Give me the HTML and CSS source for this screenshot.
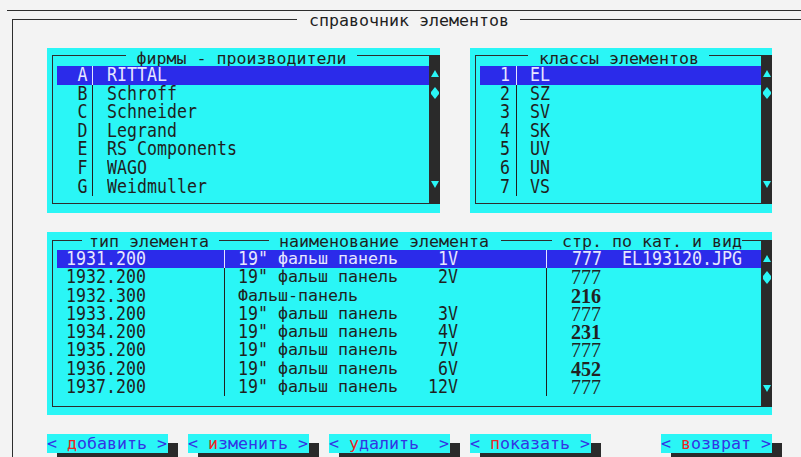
FILE: index.html
```html
<!DOCTYPE html>
<html lang="ru">
<head>
<meta charset="utf-8">
<title>справочник элементов</title>
<link rel="stylesheet" href="styles.css">
</head>
<body>
<div class="screen">
  <div class="topline"></div>
  <div class="desk">
    <div class="desk-head"><span class="ln"></span><span class="desk-title">справочник элементов</span><span class="ln"></span></div>
    <div class="desk-body">
      <div class="tops">
        <section class="panel firms">
          <div class="frame">
            <div class="frame-head"><span class="ln"></span><span class="frame-title">фирмы - производители</span><span class="ln"></span></div>
            <ul class="list">
              <li class="row sel"><span class="key"><span class="t">A</span></span><span class="name"><span class="t">RITTAL</span></span></li>
              <li class="row"><span class="key"><span class="t">B</span></span><span class="name"><span class="t">Schroff</span></span></li>
              <li class="row"><span class="key"><span class="t">C</span></span><span class="name"><span class="t">Schneider</span></span></li>
              <li class="row"><span class="key"><span class="t">D</span></span><span class="name"><span class="t">Legrand</span></span></li>
              <li class="row"><span class="key"><span class="t">E</span></span><span class="name"><span class="t">RS Components</span></span></li>
              <li class="row"><span class="key"><span class="t">F</span></span><span class="name"><span class="t">WAGO</span></span></li>
              <li class="row"><span class="key"><span class="t">G</span></span><span class="name"><span class="t">Weidmuller</span></span></li>
            </ul>
          </div>
          <div class="scroll">
            <svg class="up" width="8" height="7" viewBox="0 0 8 7"><path d="M4 0 8 7H0z"/></svg>
            <svg class="dia" width="8" height="12" viewBox="0 0 8 12"><path d="M4 0 8 5v2l-4 5-4-5V5z"/></svg>
            <svg class="down" width="8" height="7" viewBox="0 0 8 7"><path d="M0 0h8L4 7z"/></svg>
          </div>
        </section>
        <section class="panel classes">
          <div class="frame">
            <div class="frame-head"><span class="ln"></span><span class="frame-title">классы элементов</span><span class="ln"></span></div>
            <ul class="list">
              <li class="row sel"><span class="key"><span class="t">1</span></span><span class="name"><span class="t">EL</span></span></li>
              <li class="row"><span class="key"><span class="t">2</span></span><span class="name"><span class="t">SZ</span></span></li>
              <li class="row"><span class="key"><span class="t">3</span></span><span class="name"><span class="t">SV</span></span></li>
              <li class="row"><span class="key"><span class="t">4</span></span><span class="name"><span class="t">SK</span></span></li>
              <li class="row"><span class="key"><span class="t">5</span></span><span class="name"><span class="t">UV</span></span></li>
              <li class="row"><span class="key"><span class="t">6</span></span><span class="name"><span class="t">UN</span></span></li>
              <li class="row"><span class="key"><span class="t">7</span></span><span class="name"><span class="t">VS</span></span></li>
            </ul>
          </div>
          <div class="scroll">
            <svg class="up" width="8" height="7" viewBox="0 0 8 7"><path d="M4 0 8 7H0z"/></svg>
            <svg class="dia" width="8" height="12" viewBox="0 0 8 12"><path d="M4 0 8 5v2l-4 5-4-5V5z"/></svg>
            <svg class="down" width="8" height="7" viewBox="0 0 8 7"><path d="M0 0h8L4 7z"/></svg>
          </div>
        </section>
      </div>

      <section class="panel items">
        <div class="frame">
          <div class="frame-head cols">
            <span class="ln l1"></span><span class="frame-title h1">тип элемента</span><span class="ln l2"></span><span class="frame-title h2">наименование элемента</span><span class="ln l3"></span><span class="frame-title h3">стр. по кат. и вид</span><span class="ln l4"></span>
          </div>
          <ul class="list table">
            <li class="row sel"><span class="c1"><span class="t">1931.200</span></span><span class="c2"><span class="t">19"</span> фальш панель    <span class="t">1V</span></span><span class="c3"><span class="t">777  EL193120.JPG</span></span></li>
            <li class="row"><span class="c1"><span class="t">1932.200</span></span><span class="c2"><span class="t">19"</span> фальш панель    <span class="t">2V</span></span><span class="c3 serif">777</span></li>
            <li class="row"><span class="c1"><span class="t">1932.300</span></span><span class="c2">Фальш-панель</span><span class="c3 serif bold">216</span></li>
            <li class="row"><span class="c1"><span class="t">1933.200</span></span><span class="c2"><span class="t">19"</span> фальш панель    <span class="t">3V</span></span><span class="c3 serif">777</span></li>
            <li class="row"><span class="c1"><span class="t">1934.200</span></span><span class="c2"><span class="t">19"</span> фальш панель    <span class="t">4V</span></span><span class="c3 serif bold">231</span></li>
            <li class="row"><span class="c1"><span class="t">1935.200</span></span><span class="c2"><span class="t">19"</span> фальш панель    <span class="t">7V</span></span><span class="c3 serif">777</span></li>
            <li class="row"><span class="c1"><span class="t">1936.200</span></span><span class="c2"><span class="t">19"</span> фальш панель    <span class="t">6V</span></span><span class="c3 serif bold">452</span></li>
            <li class="row"><span class="c1"><span class="t">1937.200</span></span><span class="c2"><span class="t">19"</span> фальш панель   <span class="t">12V</span></span><span class="c3 serif">777</span></li>
          </ul>
        </div>
        <div class="scroll long">
          <svg class="up" width="8" height="7" viewBox="0 0 8 7"><path d="M4 0 8 7H0z"/></svg>
          <svg class="dia" width="8" height="13" viewBox="0 0 8 13"><path d="M4 0 8 5v3l-4 5-4-5V5z"/></svg>
          <svg class="down" width="8" height="7" viewBox="0 0 8 7"><path d="M0 0h8L4 7z"/></svg>
        </div>
      </section>

      <div class="actions">
        <button class="btn">&lt; <span class="hot">д</span>обавить &gt;</button>
        <button class="btn">&lt; <span class="hot">и</span>зменить &gt;</button>
        <button class="btn">&lt; <span class="hot">у</span>далить  &gt;</button>
        <button class="btn">&lt; <span class="hot">п</span>оказать &gt;</button>
        <button class="btn back">&lt; <span class="hot">в</span>озврат &gt;</button>
      </div>
    </div>
  </div>
</div>
</body>
</html>
```

FILE: styles.css
```css
:root {
  --bg: #f3f3f3;
  --cyan: #2af6f6;
  --sel: #2b2bea;
  --sel-ink: #e6e6ff;
  --ink: #1f1f1f;
  --line: #2d2d2d;
  --bar: #2a2a2a;
  --btn-ink: #3434e4;
  --hot: #ee2424;
}

html, body {
  margin: 0;
  overflow: hidden;
  background: var(--bg);
}

body {
  width: 801px;
  height: 457px;
  font-family: "DejaVu Sans Mono", "Liberation Mono", monospace;
  font-size: 16.61px;
  color: var(--ink);
}

/* text-mode glyphs: the tall, narrow screen font */
.t {
  display: inline-block;
  line-height: 15px;
  transform: scaleY(1.22);
}

.screen {
  height: 457px;
  box-sizing: border-box;
  padding-top: 10px;
}

.topline {
  margin-left: 7px;
  height: 1px;
  background: var(--line);
}

/* outer window with its caption on the top edge */
.desk {
  margin: 1px 0 0 12px;
  width: 793px;
}

.desk-head {
  display: flex;
  height: 18px;
}

.desk-head .ln {
  flex: 1;
  margin-top: 7px;
  border-top: 1px solid var(--line);
}

.desk-head .ln:first-child { border-left: 1px solid var(--line); }
.desk-head .ln:last-child { border-right: 1px solid var(--line); }

.desk-title {
  line-height: 18px;
  padding: 0 11px 0 12px;
  white-space: pre;
}

.desk-body {
  border-left: 1px solid var(--line);
  border-right: 1px solid var(--line);
  padding: 18px 0 0 34px;
  height: 409px;
}

.tops {
  display: flex;
  gap: 30px;
}

/* cyan panels */
.panel {
  display: flex;
  background: var(--cyan);
  padding: 0 0 9px 5px;
}

.firms { width: 393px; box-sizing: border-box; }
.classes { width: 302px; box-sizing: border-box; }

.frame {
  flex: 1;
  display: flex;
  flex-direction: column;
  min-width: 0;
}

.frame-head {
  display: flex;
  align-items: flex-start;
  height: 18px;
}

.frame-head .ln {
  flex: 1;
  align-self: stretch;
  margin-top: 7px;
  border-top: 1px solid var(--line);
}

.frame-head .ln:first-child { border-left: 1px solid var(--line); }
.frame-head .ln:last-child { border-right: 1px solid var(--line); }

.frame-title {
  line-height: 18px;
  padding: 2px 10px 0 11px;
  white-space: pre;
}

.list {
  list-style: none;
  margin: 0;
  padding: 0 0 0 4px;
  height: 138px;
  box-sizing: border-box;
  border: 1px solid var(--line);
  border-top: 0;
}

.row {
  display: flex;
  height: 18.6px;
  line-height: 18.6px;
  white-space: pre;
}

.row.sel {
  background: var(--sel);
  color: var(--sel-ink);
}

.key {
  box-sizing: border-box;
  width: 35px;
  padding-right: 4.5px;
  text-align: right;
}

.name {
  flex: 1;
  border-left: 1px solid currentColor;
  padding-left: 14px;
}

.classes .key {
  width: 36px;
  padding-right: 6px;
}

.classes .name {
  padding-left: 13px;
}

/* scroll bars */
.scroll {
  width: 10px;
  height: 149px;
  margin-top: 7px;
  background: var(--bar);
  display: flex;
  flex-direction: column;
  align-items: center;
}

.scroll svg {
  display: block;
  fill: var(--cyan);
}

.scroll .up { margin-top: 15px; }
.scroll .dia { margin-top: 10px; }
.scroll .down { margin-top: auto; margin-bottom: 16px; }

.scroll.long {
  height: 167px;
}

.scroll.long .dia { margin-top: 9px; }
.scroll.long .down { margin-bottom: 15px; }

/* element table */
.items {
  width: 725px;
  box-sizing: border-box;
  margin-top: 19px;
  padding: 1px 0 8px 5px;
}

.frame-head.cols {
  height: 17px;
}

.cols .frame-title {
  padding-top: 0;
}

.cols .l1 { flex: 0 0 29px; }
.cols .l2 { flex: 0 0 50px; }
.cols .l3 { flex: 0 0 51px; }
.cols .l4 { flex: 1; }

.cols .h1 { padding: 0 10px 0 7px; }
.cols .h2 { padding: 0 12px 0 10px; }
.cols .h3 { padding: 0 0 0 10px; }

.table {
  height: 157px;
}

.table .row {
  height: 18.3px;
  line-height: 18.3px;
}

.c1 {
  box-sizing: border-box;
  width: 167px;
  padding-left: 9px;
}

.c2 {
  box-sizing: border-box;
  width: 322px;
  border-left: 1px solid currentColor;
  padding-left: 13px;
}

.c3 {
  flex: 1;
  border-left: 1px solid currentColor;
  padding-left: 25px;
}

.c3.serif {
  font-family: "Liberation Serif", serif;
  font-size: 20px;
  padding-left: 24px;
  color: #222;
  border-left-color: var(--ink);
}

.c3.bold {
  font-weight: bold;
}

/* command buttons */
.actions {
  display: flex;
  gap: 20px;
  margin-top: 19px;
}

.btn {
  font: inherit;
  border: 0;
  margin: 0;
  height: 19px;
  padding: 1px 1px 0 0;
  line-height: 18px;
  white-space: pre;
  background: var(--cyan);
  color: var(--btn-ink);
  box-shadow: 10px 9px 0 var(--bar);
  cursor: default;
}

.btn .hot {
  color: var(--hot);
}

.btn.back {
  margin-left: 50px;
}
```
